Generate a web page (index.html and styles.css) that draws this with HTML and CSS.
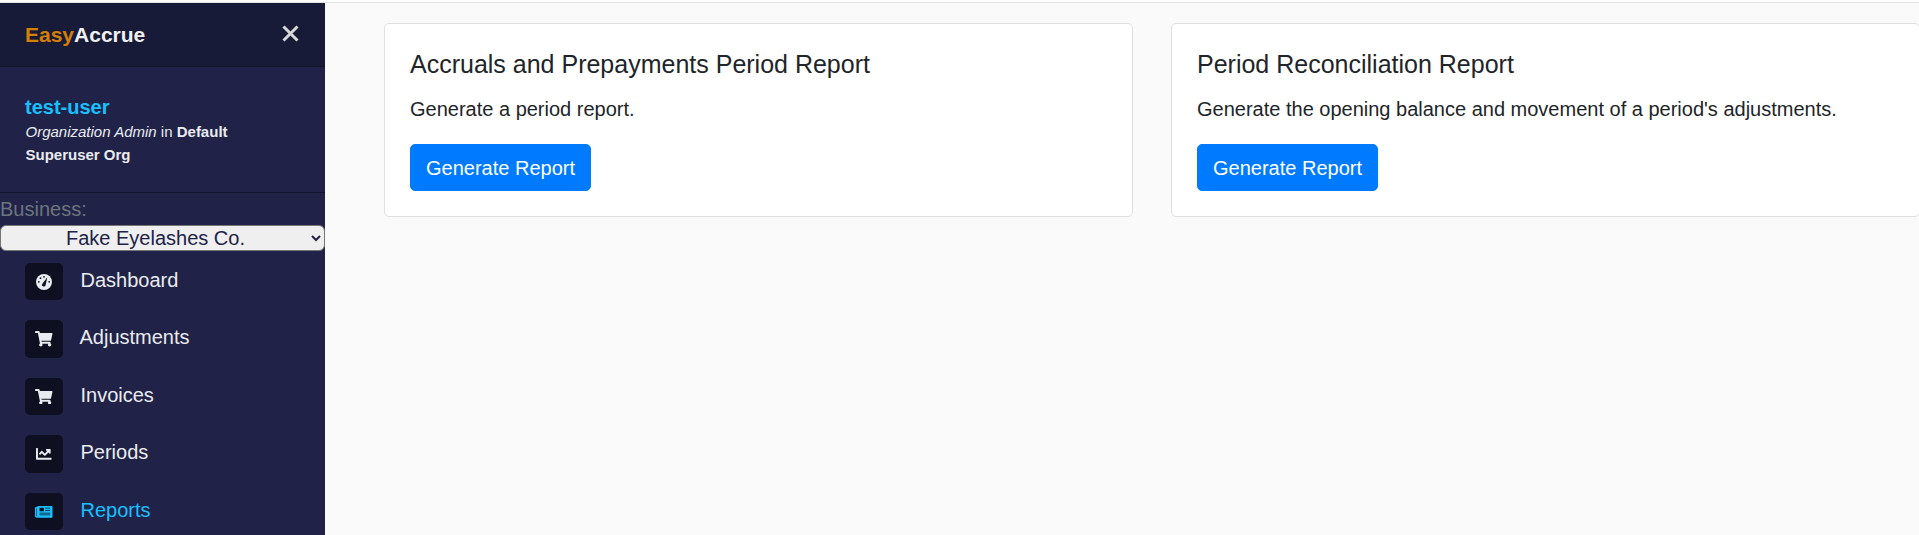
FILE: index.html
```html
<!DOCTYPE html>
<html lang="en">
<head>
<meta charset="utf-8">
<title>EasyAccrue Reports</title>
<link rel="stylesheet" href="styles.css">
</head>
<body>
<div class="page">
  <aside class="sidebar">
    <header class="brand">
      <div class="brand-name"><span class="brand-easy">Easy</span>Accrue</div>
      <svg class="brand-close" viewBox="0 0 17 17" aria-hidden="true"><path d="M1.500 1.500 15.500 15.500M15.500 1.500 1.500 15.500"/></svg>
    </header>
    <section class="user">
      <div class="user-name">test-user</div>
      <div class="user-role"><em>Organization Admin</em> in <strong>Default Superuser Org</strong></div>
    </section>
    <section class="business">
      <label class="business-label" for="business">Business:</label>
      <select class="business-select" id="business"><option>Fake Eyelashes Co.</option></select>
    </section>
    <nav class="nav">
      <a class="nav-item">
        <span class="nav-icon"><svg class="icon-gauge" viewBox="0 0 16 16" aria-hidden="true"><circle cx="8" cy="8" r="8"/><path class="gauge-mark" d="M11.300 3.200 9.700 10.800a1.800 1.800 0 1 1-3.300-1.100z"/><circle class="gauge-mark" cx="8" cy="2.800" r=".9"/><circle class="gauge-mark" cx="4.500" cy="4.200" r=".9"/><circle class="gauge-mark" cx="2.800" cy="7.800" r=".9"/><circle class="gauge-mark" cx="13.200" cy="7.800" r=".9"/></svg></span>
        <span class="nav-label">Dashboard</span>
      </a>
      <a class="nav-item">
        <span class="nav-icon"><svg class="icon-wide" viewBox="0 0 576 512" aria-hidden="true"><path d="M528.120 301.319l47.273-208C578.806 78.301 567.391 64 551.990 64H159.208l-9.166-44.810C147.758 8.021 137.930 0 126.529 0H24C10.745 0 0 10.745 0 24v16c0 13.255 10.745 24 24 24h69.883l70.248 343.435C147.325 417.100 136 435.222 136 456c0 30.928 25.072 56 56 56s56-25.072 56-56c0-15.674-6.447-29.835-16.824-40h209.647C430.447 426.165 424 440.326 424 456c0 30.928 25.072 56 56 56s56-25.072 56-56c0-22.172-12.888-41.332-31.579-50.405l5.517-24.276c3.413-15.018-8.002-29.319-23.403-29.319H218.117l-6.545-32h293.145c11.206 0 20.920-7.754 23.403-18.681z"/></svg></span>
        <span class="nav-label nav-label-tight">Adjustments</span>
      </a>
      <a class="nav-item">
        <span class="nav-icon"><svg class="icon-wide" viewBox="0 0 576 512" aria-hidden="true"><path d="M528.120 301.319l47.273-208C578.806 78.301 567.391 64 551.990 64H159.208l-9.166-44.810C147.758 8.021 137.930 0 126.529 0H24C10.745 0 0 10.745 0 24v16c0 13.255 10.745 24 24 24h69.883l70.248 343.435C147.325 417.100 136 435.222 136 456c0 30.928 25.072 56 56 56s56-25.072 56-56c0-15.674-6.447-29.835-16.824-40h209.647C430.447 426.165 424 440.326 424 456c0 30.928 25.072 56 56 56s56-25.072 56-56c0-22.172-12.888-41.332-31.579-50.405l5.517-24.276c3.413-15.018-8.002-29.319-23.403-29.319H218.117l-6.545-32h293.145c11.206 0 20.920-7.754 23.403-18.681z"/></svg></span>
        <span class="nav-label">Invoices</span>
      </a>
      <a class="nav-item">
        <span class="nav-icon"><svg class="icon-square" viewBox="0 0 512 512" aria-hidden="true"><path d="M496 384H64V80c0-8.840-7.160-16-16-16H16C7.160 64 0 71.160 0 80v336c0 17.670 14.330 32 32 32h464c8.840 0 16-7.160 16-16v-32c0-8.840-7.160-16-16-16zM464 96H345.940c-21.380 0-32.090 25.850-16.970 40.970l32.400 32.400L288 242.750l-73.370-73.370c-12.500-12.500-32.760-12.500-45.250 0l-68.690 68.690c-6.250 6.250-6.250 16.380 0 22.630l22.620 22.620c6.250 6.250 16.380 6.250 22.630 0L192 237.250l73.370 73.370c12.500 12.500 32.760 12.500 45.250 0l96-96 32.400 32.400c15.120 15.120 40.970 4.410 40.970-16.970V112c.010-8.840-7.150-16-15.990-16z"/></svg></span>
        <span class="nav-label">Periods</span>
      </a>
      <a class="nav-item nav-item-active">
        <span class="nav-icon"><svg class="icon-wide" viewBox="0 0 576 512" aria-hidden="true"><path fill-rule="evenodd" d="M552 64H112c-20.858 0-38.643 13.377-45.248 32H24c-13.255 0-24 10.745-24 24v272c0 30.928 25.072 56 56 56h496c13.255 0 24-10.745 24-24V88c0-13.255-10.745-24-24-24zM48 392V144h16v248c0 4.411-3.589 8-8 8s-8-3.589-8-8zM150 125h140v115H150zM330 125h170v24H330zM330 195h170v24H330zM150 285h350v24H150zM150 345h350v24H150z"/></svg></span>
        <span class="nav-label">Reports</span>
      </a>
    </nav>
  </aside>
  <main class="content">
    <article class="card">
      <h2 class="card-title">Accruals and Prepayments Period Report</h2>
      <p class="card-text">Generate a period report.</p>
      <button class="btn" type="button">Generate Report</button>
    </article>
    <article class="card">
      <h2 class="card-title">Period Reconciliation Report</h2>
      <p class="card-text">Generate the opening balance and movement of a period's adjustments.</p>
      <button class="btn" type="button">Generate Report</button>
    </article>
  </main>
</div>
</body>
</html>
```
FILE: styles.css
```css
* { box-sizing: border-box; }

html, body {
  margin: 0;
  height: 100%;
  overflow: hidden;
  background: #fff;
}

body {
  padding-top: 2px;
  font-family: "Liberation Sans", Arial, sans-serif;
  font-size: 20px;
  line-height: 30px;
  color: #212529;
}

.page {
  display: flex;
  height: 100%;
  border-top: 1px solid #e3e3e3;
}

/* Sidebar */
.sidebar {
  flex: 0 0 325px;
  background: #212248;
  color: #fff;
}

.brand {
  display: flex;
  align-items: center;
  justify-content: space-between;
  height: 64px;
  padding: 0 26px 0 25px;
  background: #171b38;
  border-bottom: 1px solid #12152c;
}

.brand-name {
  font-size: 21px;
  font-weight: 700;
  color: #f0f0f0;
}

.brand-easy { color: #d57f05; }

.brand-close {
  width: 17px;
  height: 17px;
  margin-bottom: 3px;
  fill: none;
  stroke: #d8d8d8;
  stroke-width: 3;
}

.user {
  height: 126px;
  padding: 26px 25px 0;
  border-bottom: 1px solid #12152c;
}

.user-name {
  font-size: 20px;
  font-weight: 700;
  line-height: 28px;
  color: #17c0ff;
}

.user-role {
  padding-left: .5px;
  font-size: 15px;
  line-height: 22.500px;
  color: #e9ecef;
}

.business {
  display: flex;
  flex-direction: column;
}

.business-label {
  height: 32px;
  font-size: 20px;
  line-height: 32px;
  color: #6c757d;
}

.business-select {
  display: block;
  width: 100%;
  height: 26px;
  padding: 0 2px 0 0;
  font-family: inherit;
  font-size: 20px;
  line-height: 24px;
  color: #212248;
  text-align: center;
  text-align-last: center;
  background-color: #efefef;
  border: 1px solid #767676;
  border-radius: 6px;
}

.nav {
  display: flex;
  flex-direction: column;
  gap: 20px;
  padding: 11.750px 25px 0;
}

.nav-item {
  display: flex;
  align-items: center;
  color: #e9ecef;
}

.nav-icon {
  display: flex;
  flex: 0 0 38px;
  align-items: center;
  justify-content: center;
  height: 37.500px;
  margin-right: 17.500px;
  background: #0e0f20;
  border-radius: 5px;
  fill: #e9ecef;
}

.nav-label { padding-bottom: 4px; }
.nav-label-tight { margin-left: -1px; }

.nav-item-active { color: #17c0ff; }
.nav-item-active .nav-icon { fill: #17c0ff; }

.icon-wide { width: 17.500px; height: 15.600px; }
.icon-square { width: 15.600px; height: 15.600px; }
.icon-gauge { width: 16px; height: 16px; }
.gauge-mark { fill: #0e0f20; }

/* Content */
.content {
  display: grid;
  flex: 1;
  grid-template-columns: 749px 749px;
  align-items: start;
  column-gap: 38px;
  padding: 20px 0 0 59px;
  background: #fafafa;
  overflow: hidden;
}

.card {
  padding: 25px;
  background: #fff;
  border: 1px solid #dfdfdf;
  border-radius: 5px;
}

.card-title {
  margin: 0 0 15px;
  font-size: 25px;
  font-weight: 400;
  line-height: 30px;
}

.card-text { margin: 0 0 20px; }

.btn {
  display: block;
  height: 47px;
  padding: 0 15px;
  font-family: inherit;
  font-size: 20px;
  line-height: 30px;
  color: #fff;
  background: #007bff;
  border: 1px solid #007bff;
  border-radius: 5px;
}
```
